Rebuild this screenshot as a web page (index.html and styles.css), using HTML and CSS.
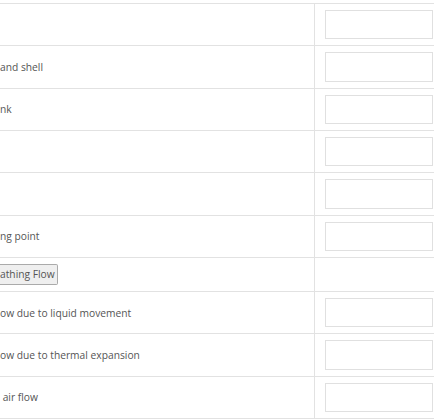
FILE: index.html
```html
<!DOCTYPE html>
<html lang="en">
<head>
    <meta charset="UTF-8">
    <meta name="viewport" content="width=device-width, initial-scale=1.0">
    <title>Tank Breathing</title>
    <link rel="stylesheet" href="styles.css">
</head>
<body>
    <table class="calc-table">
        <tr>
            <td class="label"></td>
            <td class="field"><input type="text"></td>
        </tr>
        <tr>
            <td class="label">and shell</td>
            <td class="field"><input type="text"></td>
        </tr>
        <tr>
            <td class="label">nk</td>
            <td class="field"><input type="text"></td>
        </tr>
        <tr>
            <td class="label"></td>
            <td class="field"><input type="text"></td>
        </tr>
        <tr>
            <td class="label"></td>
            <td class="field"><input type="text"></td>
        </tr>
        <tr>
            <td class="label">ng point</td>
            <td class="field"><input type="text"></td>
        </tr>
        <tr class="action-row">
            <td class="label"><button class="calc-btn">athing Flow</button></td>
            <td class="field"></td>
        </tr>
        <tr>
            <td class="label">ow due to liquid movement</td>
            <td class="field"><input type="text"></td>
        </tr>
        <tr>
            <td class="label">ow due to thermal expansion</td>
            <td class="field"><input type="text"></td>
        </tr>
        <tr>
            <td class="label">&nbsp;air flow</td>
            <td class="field"><input type="text"></td>
        </tr>
    </table>
</body>
</html>
```

FILE: styles.css
```css
html, body {
    margin: 0;
    padding: 0;
    overflow: hidden;
    background-color: #fff;
}

body {
    font-family: "Open Sans", Arial, sans-serif;
    font-size: 10.25px;
    color: #555;
    padding-top: 3px;
}

/* Calculator table */
.calc-table {
    border-collapse: collapse;
    width: 450px;
}

.calc-table td {
    border-top: 1px solid #e2e2e2;
    border-bottom: 1px solid #e2e2e2;
    vertical-align: middle;
    padding: 0;
}

.calc-table .label {
    width: 314px;
    padding: 0;
    white-space: nowrap;
}

.calc-table .field {
    border-left: 1px solid #e2e2e2;
    padding: 6px 10px;
    height: 29.33px;
}

.calc-table .field input {
    display: block;
    box-sizing: border-box;
    width: 108px;
    height: 29.33px;
    border: 1px solid #e0e0e0;
    margin: 0;
    padding: 0 6px;
    font-family: inherit;
}

.action-row .field {
    height: 21px;
}

.calc-btn {
    font-family: inherit;
    font-size: 10.25px;
    color: #555;
    background-color: #efefef;
    border: 1px solid #aaa;
    border-left: none;
    border-radius: 0 2px 2px 0;
    padding: 1px 2px 2px 0;
    margin: 0;
    height: 21px;
    line-height: 16px;
}
```
